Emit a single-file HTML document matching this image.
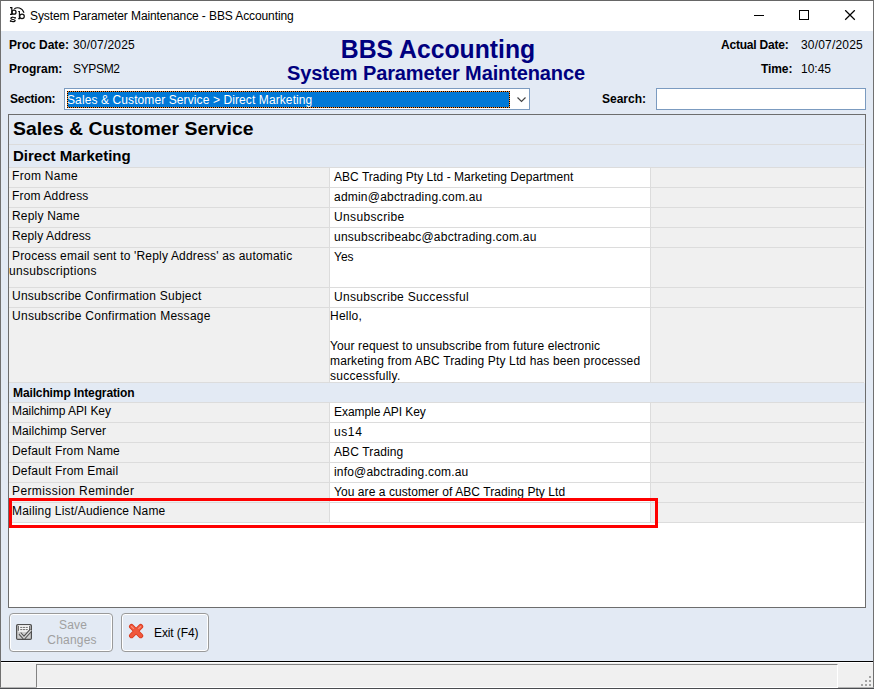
<!DOCTYPE html>
<html><head><meta charset="utf-8">
<style>
*{box-sizing:border-box;margin:0;padding:0}
html,body{width:874px;height:689px;overflow:hidden;background:#4a4c50}
body{font-family:"Liberation Sans",sans-serif;font-size:12px;color:#000;position:relative}
.abs{position:absolute}
#win{left:0;top:0;width:874px;height:688px;background:#E3EAF4;border:1px solid #707070;border-top-color:#666;border-bottom:1px solid #b4b4b4}
#title{left:1px;top:1px;width:872px;height:30px;background:#fff}
#title .t{left:29px;top:8px;font-size:12px;line-height:14px;white-space:nowrap;color:#000;letter-spacing:-0.1px}
.lbl{font-weight:bold;font-size:12px;white-space:nowrap;line-height:14px}
.val{font-size:12px;white-space:nowrap;line-height:14px}
.h1{font-weight:bold;color:#00007f;white-space:nowrap;text-align:center}
#combo{left:64px;top:88px;width:466px;height:22px;background:#fff;border:1px solid #7b9bc0}
#combo .sel{left:2px;top:2px;width:443px;height:17px;background:#0078d7;color:#fff;font-size:12px;line-height:18px;white-space:nowrap;letter-spacing:0.1px}
#combo .foc{left:2px;top:2px;width:443px;height:17px;border:1px dotted #000}
#search{left:656px;top:88px;width:210px;height:22px;background:#fff;border:1px solid #7b9bc0}
#panel{left:8px;top:114px;width:858px;height:494px;background:#fff;border:1px solid #6d6d6d}
.row{position:absolute;left:0;width:855px;border-bottom:1px solid #dcdcdc}
.row::after{content:"";position:absolute;left:855px;top:0;bottom:-1px;width:1px;background:#f2f2f2}
.hd::after{background:#E3EAF4}
.sx{display:inline-block;transform-origin:0 50%}
.hd{background:#E3EAF4;font-weight:bold;white-space:nowrap}
.c1{position:absolute;left:0;top:0;bottom:0;width:321px;background:#f0f0f0;border-right:1px solid #dcdcdc;padding:1px 0 0 3px;line-height:15px;font-size:12px;white-space:nowrap}
.c2{position:absolute;left:321px;top:0;bottom:0;width:321px;background:#fff;border-right:1px solid #dcdcdc;padding:2px 0 0 4px;line-height:15px;font-size:12px;white-space:nowrap}
.c2.ml{padding:1px 0 0 0}
.c3{position:absolute;left:642px;top:0;bottom:0;right:0;background:#f0f0f0}
.btn{border:1px solid #9a9a9a;border-radius:4px;background:#E3EAF4;height:39px;top:613px;box-shadow:inset 0 0 0 1px #fff}
#status{left:1px;top:661px;width:872px;height:26px;background:#f0f0f0;border-top:1px solid #000}
</style></head><body>
<div id="win" class="abs"></div>
<div id="title" class="abs">
  <svg class="abs" style="left:8px;top:4px" width="20" height="20" viewBox="9 5 20 20" fill="none" stroke="#0a0a0a"><path d="M10 7.700h1.800v6.600M10 14.300h2.600" stroke-width="1.200"/><ellipse cx="14" cy="12.150" rx="2" ry="2.050" stroke-width="1.250"/><path d="M15.100 18.500C15 16.900 10.900 16.800 10.900 18.400C10.900 19.900 15.200 19.100 15.200 20.600C15.200 21.900 10.800 21.900 10.600 20.300" stroke-width="1.250"/><path d="M15.300 17v1.500M10.400 20.300v1.700" stroke-width="0.900"/><path d="M18.200 11.500h1.200v7M18.200 18.600h2" stroke-width="1.150" stroke="#111"/><ellipse cx="22" cy="16.350" rx="2.300" ry="2.250" stroke-width="1.200" stroke="#111"/><path d="M14.300 8.700C17 7 22 7.100 24 12.800" stroke-width="1.100"/></svg>
  <div class="abs t">System Parameter Maintenance - BBS Accounting</div>
  <svg class="abs" style="left:753px;top:9px" width="104" height="12" viewBox="0 0 104 12" fill="none" stroke="#000" stroke-width="1"><path d="M0 5.500h10"/><rect x="45.500" y="0.500" width="9" height="9"/><path d="M91.200 0.200l9.600 9.600M100.800 0.200l-9.600 9.600" stroke-width="1.250"/></svg>
</div>

<div class="abs lbl" style="left:9px;top:38px">Proc Date:</div>
<div class="abs val" style="left:73px;top:38px;letter-spacing:0.19px">30/07/2025</div>
<div class="abs lbl" style="left:9px;top:62px">Program:</div>
<div class="abs val" style="left:73px;top:62px;letter-spacing:-0.34px">SYPSM2</div>
<div class="abs lbl" style="left:10px;top:92px;letter-spacing:-0.25px">Section:</div>

<div class="abs h1" style="left:237.500px;width:400px;top:33.600px;font-size:25px;line-height:30px;transform:scaleX(0.990)">BBS Accounting</div>
<div class="abs h1" style="left:236px;width:400px;top:61px;font-size:20px;line-height:24px;letter-spacing:-0.12px">System Parameter Maintenance</div>

<div class="abs lbl" style="left:721px;top:38px;letter-spacing:-0.2px">Actual Date:</div>
<div class="abs val" style="left:801px;top:38px;letter-spacing:0.19px">30/07/2025</div>
<div class="abs lbl" style="left:761px;top:62px;letter-spacing:-0.1px">Time:</div>
<div class="abs val" style="left:801px;top:62px">10:45</div>

<div id="combo" class="abs"><div class="abs sel">Sales &amp; Customer Service &gt; Direct Marketing</div><div class="abs foc" style="border:1px solid #ff8a2a"></div><div class="abs foc"></div>
<svg class="abs" style="left:451px;top:7px" width="12" height="8" viewBox="0 0 12 8" fill="none" stroke="#444" stroke-width="1.150"><path d="M1.500 1.500l4 4 4-4"/></svg></div>
<div class="abs lbl" style="left:602px;top:92px">Search:</div>
<div id="search" class="abs"></div>

<div id="panel" class="abs">
  <div class="row hd" style="top:0;height:30px;font-size:18.400px;line-height:28px;padding-left:4px"><span class="sx" style="transform:scaleX(1.055)">Sales &amp; Customer Service</span></div>
  <div class="row hd" style="top:30px;height:23px;font-size:14.670px;line-height:22px;padding-left:4px"><span class="sx" style="transform:scaleX(1.025)">Direct Marketing</span></div>
  <div class="row" style="top:53px;height:20px"><div class="c1"><span style="letter-spacing:0.3px">From Name</span></div><div class="c2"><span style="letter-spacing:0.03px">ABC Trading Pty Ltd - Marketing Department</span></div><div class="c3"></div></div>
  <div class="row" style="top:73px;height:20px"><div class="c1"><span style="letter-spacing:0.15px">From Address</span></div><div class="c2"><span style="letter-spacing:0.21px">admin@abctrading.com.au</span></div><div class="c3"></div></div>
  <div class="row" style="top:93px;height:20px"><div class="c1"><span style="letter-spacing:0.19px">Reply Name</span></div><div class="c2"><span style="letter-spacing:0.35px">Unsubscribe</span></div><div class="c3"></div></div>
  <div class="row" style="top:113px;height:20px"><div class="c1"><span style="letter-spacing:0.12px">Reply Address</span></div><div class="c2"><span style="letter-spacing:0.24px">unsubscribeabc@abctrading.com.au</span></div><div class="c3"></div></div>
  <div class="row" style="top:133px;height:40px"><div class="c1"><span style="letter-spacing:0.18px">Process email sent to 'Reply Address' as automatic</span><br><span style="margin-left:-3px;letter-spacing:0.3px">unsubscriptions</span></div><div class="c2">Yes</div><div class="c3"></div></div>
  <div class="row" style="top:173px;height:20px"><div class="c1"><span style="letter-spacing:0.255px">Unsubscribe Confirmation Subject</span></div><div class="c2"><span style="letter-spacing:0.31px">Unsubscribe Successful</span></div><div class="c3"></div></div>
  <div class="row" style="top:193px;height:75px"><div class="c1"><span style="letter-spacing:0.27px">Unsubscribe Confirmation Message</span></div><div class="c2 ml"><span style="letter-spacing:0.23px">Hello,</span><br><br><span style="letter-spacing:0.1px">Your request to unsubscribe from future electronic</span><br><span style="letter-spacing:0.14px">marketing from ABC Trading Pty Ltd has been processed</span><br><span style="letter-spacing:0.26px">successfully.</span></div><div class="c3"></div></div>
  <div class="row hd" style="top:268px;height:20px;font-size:12px;line-height:21px;padding-left:4px"><span style="letter-spacing:-0.12px">Mailchimp Integration</span></div>
  <div class="row" style="top:288px;height:20px"><div class="c1"><span style="letter-spacing:-0.07px">Mailchimp API Key</span></div><div class="c2"><span style="letter-spacing:-0.06px">Example API Key</span></div><div class="c3"></div></div>
  <div class="row" style="top:308px;height:20px"><div class="c1"><span style="letter-spacing:0.09px">Mailchimp Server</span></div><div class="c2"><span style="letter-spacing:0.6px">us14</span></div><div class="c3"></div></div>
  <div class="row" style="top:328px;height:20px"><div class="c1"><span style="letter-spacing:0.19px">Default From Name</span></div><div class="c2"><span style="letter-spacing:0.12px">ABC Trading</span></div><div class="c3"></div></div>
  <div class="row" style="top:348px;height:20px"><div class="c1"><span style="letter-spacing:0.2px">Default From Email</span></div><div class="c2"><span style="letter-spacing:0.19px">info@abctrading.com.au</span></div><div class="c3"></div></div>
  <div class="row" style="top:368px;height:20px"><div class="c1"><span style="letter-spacing:0.4px">Permission Reminder</span></div><div class="c2"><span style="letter-spacing:0.07px">You are a customer of ABC Trading Pty Ltd</span></div><div class="c3"></div></div>
  <div class="row" style="top:388px;height:20px"><div class="c1"><span style="letter-spacing:0.18px">Mailing List/Audience Name</span></div><div class="c2"></div><div class="c3"></div></div>
</div>
<div class="abs" style="left:9px;top:498px;width:649px;height:30px;border:3px solid #ff0000"></div>

<div class="abs btn" style="left:9px;width:104px"></div>
<svg class="abs" style="left:16px;top:624px" width="16" height="16" viewBox="0 0 16 16"><rect x="0.600" y="0.600" width="14.800" height="14.800" rx="1.200" fill="#cdcdcd" stroke="#505050" stroke-width="1.200"/><rect x="2.400" y="1.200" width="11.200" height="6.600" fill="#f6f6f6"/><path d="M2.400 2v4.800M13.600 2v4.800" stroke="#555" stroke-width="0.900"/><path d="M4.200 3.400h7.600M4.200 5.600h7.600" stroke="#6e6e6e" stroke-width="1" stroke-dasharray="2.200 0.600"/><path d="M3.800 9.300l4.200 4.600 7.200-8" fill="none" stroke="#4c4c4c" stroke-width="3.400"/><path d="M3.800 9.300l4.200 4.600 7.200-8" fill="none" stroke="#d2d2d2" stroke-width="1.500"/></svg>
<div class="abs" style="left:37px;top:618px;width:70px;text-align:center;color:#a0a0a0;font-size:12px;line-height:15px;letter-spacing:0.2px"><span style="margin-left:2px">Save</span><br>Changes</div>
<div class="abs btn" style="left:121px;width:88px"></div>
<svg class="abs" style="left:128px;top:623px" width="16" height="16" viewBox="0 0 16 16" fill="none" stroke-linecap="round"><path d="M3.500 3.500l9.200 9.200M12.700 3.500l-9.200 9.200" stroke="#d8381c" stroke-width="5"/><path d="M3.500 3.500l9.200 9.200M12.700 3.500l-9.200 9.200" stroke="#f0583c" stroke-width="3.500"/><path d="M3.500 3.500l2 2M12.700 3.500l-2 2" stroke="#ff9c86" stroke-width="1.100" opacity="0.800"/></svg>
<div class="abs" style="left:154px;top:626px;font-size:12px;line-height:14px;white-space:nowrap;letter-spacing:-0.1px">Exit (F4)</div>

<div id="status" class="abs">
  <div class="abs" style="left:0;top:0;width:872px;height:1px;background:#fff"></div>
  <div class="abs" style="left:35px;top:2px;width:802px;height:24px;border-left:1px solid #828282;border-top:1px solid #828282;border-right:1px solid #fff;border-bottom:1px solid #fff"></div>
  <svg class="abs" style="left:859px;top:13px" width="12" height="12" viewBox="0 0 12 12" fill="#a3a3a3"><rect x="9" y="1" width="2" height="2"/><rect x="5" y="5" width="2" height="2"/><rect x="9" y="5" width="2" height="2"/><rect x="1" y="9" width="2" height="2"/><rect x="5" y="9" width="2" height="2"/><rect x="9" y="9" width="2" height="2"/></svg>
</div>
</body></html>
